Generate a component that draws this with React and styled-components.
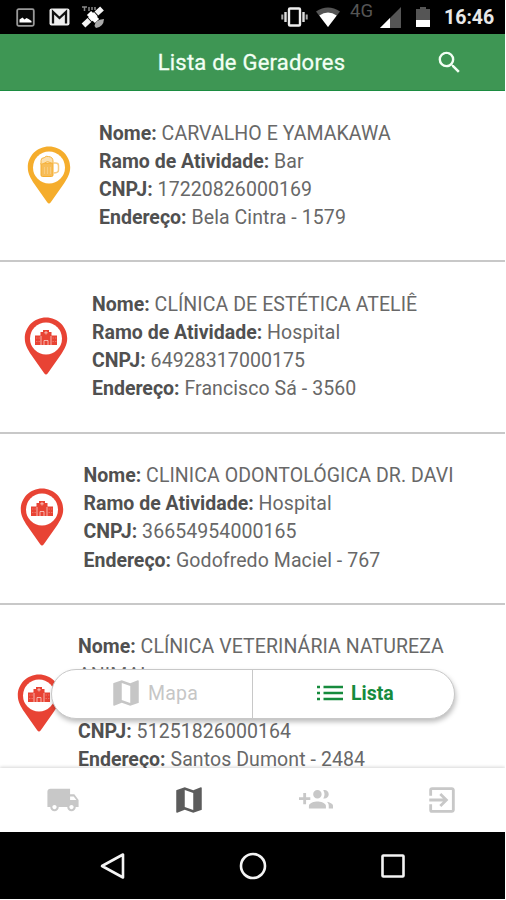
import React from "react";
import styled, { createGlobalStyle } from "styled-components";

const GlobalStyle = createGlobalStyle`
  * { box-sizing: border-box; }
  body { margin: 0; background: #fff; font-family: Roboto, "Liberation Sans", sans-serif; }
`;

const Screen = styled.div`
  width: 505px;
  height: 899px;
  display: flex;
  flex-direction: column;
  overflow: hidden;
  background: #fff;
`;

const StatusBar = styled.div`
  flex: 0 0 34px;
  display: flex;
  align-items: center;
  justify-content: space-between;
  padding: 0 10px 0 16px;
  background: #000;
  color: #e8e8e8;
`;

const StatusGroup = styled.div`
  display: flex;
  align-items: center;
`;

const Glyph = styled.svg`
  display: block;
  flex: none;
  width: ${(p) => p.$w}px;
  height: ${(p) => p.$h || p.$w}px;
  margin-left: ${(p) => p.$gap || 0}px;
`;

const Network = styled.span`
  align-self: flex-start;
  margin: -3px 0 0 10px;
  width: 25px;
  font-size: 18.5px;
  line-height: 20px;
  color: #555;
`;

const Clock = styled.span`
  margin: 2px 0 0 14px;
  width: 51px;
  font-size: 19.5px;
  font-weight: 700;
  line-height: 24px;
  white-space: nowrap;
`;

const Header = styled.header`
  flex: 0 0 57px;
  display: grid;
  grid-template-columns: 1fr auto 1fr;
  align-items: center;
  background: #3e9654;
  border-bottom: 1px solid #1c8c41;
  color: #f2fff4;
`;

const Title = styled.h1`
  grid-column: 2;
  margin: 0;
  padding: 1px 2px 0 0;
  font-size: 22px;
  font-weight: 400;
  line-height: 28px;
  letter-spacing: 0.23px;
  -webkit-text-stroke: 0.3px currentColor;
  white-space: nowrap;
`;

const SearchButton = styled.button`
  justify-self: end;
  margin-right: 41px;
  padding: 0;
  border: 0;
  background: none;
  color: inherit;
`;

const ListArea = styled.main`
  position: relative;
  flex: 0 0 677px;
  overflow: hidden;
`;

const Item = styled.article`
  display: flex;
  align-items: center;
  height: ${(p) => (p.$tall ? 200 : 171.4)}px;
  padding: 0 0 2px ${(p) => p.$inset}px;
  border-bottom: 2px solid #c8c8c8;
`;

const Details = styled.div`
  margin: ${(p) => (p.$tall ? 1 : 2)}px 0 0 ${(p) => p.$gap}px;
  width: 390px;
  font-size: 19.5px;
  line-height: 28.1px;
  color: #686868;
`;

const Line = styled.div`
  white-space: pre-line;
  letter-spacing: 0.08px;
  b { font-weight: 700; color: #505050; letter-spacing: 0; }
`;

const Switcher = styled.div`
  position: absolute;
  left: 51px;
  top: 578px;
  width: 404px;
  height: 50px;
  display: grid;
  grid-template-columns: 1fr 1fr;
  border: 1px solid #c8c8c8;
  border-radius: 25px;
  background: #fff;
  box-shadow: 1px 3px 5px rgba(0, 0, 0, 0.26);
`;

const SwitchTab = styled.button`
  position: relative;
  left: 0;
  display: flex;
  align-items: center;
  padding: 0 0 2px ${(p) => (p.$active ? 64 : 57)}px;
  margin-left: ${(p) => (p.$active ? -1 : 0)}px;
  gap: ${(p) => (p.$active ? 8 : 5)}px;
  border: 0;
  border-left: ${(p) => (p.$active ? "1px solid #c8c8c8" : "0")};
  background: none;
  font: ${(p) => (p.$active ? 700 : 400)} 19.5px Roboto, sans-serif;
  letter-spacing: ${(p) => (p.$active ? 0 : 0.2)}px;
  color: ${(p) => (p.$active ? "#168b3d" : "#c6c6c6")};
`;

const TabBar = styled.nav`
  flex: 0 0 64px;
  display: grid;
  grid-template-columns: repeat(4, 1fr);
  place-items: center;
  background: #fff;
  box-shadow: 0 -1px 3px rgba(0, 0, 0, 0.16);
  z-index: 1;
`;

const TabButton = styled.button`
  padding: 0;
  border: 0;
  background: none;
  color: ${(p) => (p.$active ? "#5c5c5c" : "#c8c8c8")};
`;

const SystemBar = styled.footer`
  flex: 0 0 67px;
  display: flex;
  align-items: center;
  justify-content: center;
  gap: 112px;
  background: #000;
  z-index: 1;
`;

const paths = {
  search: "M15.5 14h-.79l-.28-.27A6.47 6.47 0 0 0 16 9.5 6.5 6.5 0 1 0 9.5 16c1.61 0 3.09-.59 4.23-1.57l.27.28v.79l5 4.99L20.49 19l-4.99-5zm-6 0C7.01 14 5 11.99 5 9.5S7.01 5 9.5 5 14 7.01 14 9.5 11.99 14 9.5 14z",
  map: "M20.5 3l-.16.03L15 5.1 9 3 3.36 4.9c-.21.07-.36.25-.36.48V20.5c0 .28.22.5.5.5l.16-.03L9 18.9l6 2.1 5.64-1.9c.21-.07.36-.25.36-.48V3.5c0-.28-.22-.5-.5-.5zM15 19l-6-2.11V5l6 2.11V19z",
  truck: "M20 8h-3V4H3c-1.1 0-2 .9-2 2v11h2c0 1.66 1.34 3 3 3s3-1.34 3-3h6c0 1.66 1.34 3 3 3s3-1.34 3-3h2v-5l-3-4zM6 18.5c-.83 0-1.5-.67-1.5-1.5s.67-1.5 1.5-1.5 1.5.67 1.5 1.5-.67 1.5-1.5 1.5zm13.5-9l1.96 2.5H17V9.5h2.5zm-1.5 9c-.83 0-1.5-.67-1.5-1.5s.67-1.5 1.5-1.5 1.5.67 1.5 1.5-.67 1.5-1.5 1.5z",
  group: "M8 10H5V7H3v3H0v2h3v3h2v-3h3v-2zm10 1c1.66 0 2.99-1.34 2.99-3S19.66 5 18 5c-.32 0-.63.05-.91.14.57.81.9 1.79.9 2.86s-.34 2.04-.9 2.86c.28.09.59.14.91.14zm-5 0c1.66 0 2.99-1.34 2.99-3S14.66 5 13 5c-1.66 0-3 1.34-3 3s1.34 3 3 3zm6.62 2.16c.83.73 1.38 1.66 1.38 2.84v2h3v-2c0-1.54-2.37-2.49-4.38-2.84zM13 13c-2 0-6 1-6 3v2h12v-2c0-2-4-3-6-3z",
  exit: "M10.09 15.59L11.5 17l5-5-5-5-1.41 1.41L12.67 11H3v2h9.67l-2.58 2.59zM19 3H5a2 2 0 0 0-2 2v4h2V5h14v14H5v-4H3v4a2 2 0 0 0 2 2h14c1.1 0 2-.9 2-2V5c0-1.1-.9-2-2-2z",
};

function Icon({ name, size }) {
  return (
    <Glyph $w={size} viewBox="0 0 24 24" fill="currentColor">
      <path d={paths[name]} />
    </Glyph>
  );
}

function Pin({ kind }) {
  const bar = kind === "bar";
  const color = bar ? "#f5ad2c" : "#e84334";
  return (
    <Glyph $w={44} $h={58} viewBox="0 0 44 58">
      <path
        d="M22 .5C10.2.5.8 9.8.8 21.3c0 6.6 3.1 11.4 6.2 16.2L20.2 56.2q1.8 2.6 3.6 0L37 37.5c3.1-4.8 6.2-9.6 6.2-16.2C43.2 9.8 33.8.5 22 .5z"
        fill={color}
      />
      <circle cx="22" cy="21.5" r="16" fill="#fff" />
      {bar ? (
        <g>
          <path d="M14 17v12q0 1.500 1.500 1.500h9q1.500 0 1.500-1.500V17z" fill="#f7bd58" stroke={color} />
          <path d="M26.500 17h2q3 0 3 2.500v4.500q0 3-5 3" fill="none" stroke="#f8cc80" strokeWidth="1.500" />
          <path d="M14 18.500v-4q0-2.800 3.200-2.800Q19 9.500 21.500 10.500q4.500.5 4.500 4.500v2.500l-3-1-2.500-1-3 1.500z" fill="#fbe0ae" stroke="#f6b440" />
          <path d="M17.500 21v7M20.500 21v7M23.500 21v7" stroke="#f8cc7e" />
        </g>
      ) : (
        <g>
          <path d="M11 18.500h5.500v-3.500h2.500V13h6v2h2.500v3.500H33v9.500H11z" fill={color} />
          <path d="M22 14v3.500M20.200 15.800h3.600M20 28v-4.500h4V28M17 19v9M27 19v9" stroke="#fbd3cd" fill="none" strokeWidth=".8" />
          <path d="M12 21h4M12 24.500h4M28.500 21h4M28.500 24.500h4" stroke="#f07469" strokeDasharray="1.400 1.100" />
        </g>
      )}
    </Glyph>
  );
}

const generators = [
  { inset: 27, gap: 28, kind: "bar", name: "CARVALHO E YAMAKAWA", field: "Bar", cnpj: "17220826000169", address: "Bela Cintra - 1579" },
  { inset: 24, gap: 24, kind: "hospital", name: "CLÍNICA DE ESTÉTICA ATELIÊ", field: "Hospital", cnpj: "64928317000175", address: "Francisco Sá - 3560" },
  { inset: 20, gap: 19.5, kind: "hospital", name: "CLINICA ODONTOLÓGICA DR. DAVI", field: "Hospital", cnpj: "36654954000165", address: "Godofredo Maciel - 767" },
  { inset: 17, gap: 17, kind: "hospital", tall: true, name: "CLÍNICA VETERINÁRIA NATUREZA\nANIMAL", field: "Hospital", cnpj: "51251826000164", address: "Santos Dumont - 2484" },
];

function Generator({ data }) {
  return (
    <Item $inset={data.inset} $tall={data.tall}>
      <Pin kind={data.kind} />
      <Details $gap={data.gap} $tall={data.tall}>
        <Line><b>Nome:</b> {data.name}</Line>
        <Line><b>Ramo de Atividade:</b> {data.field}</Line>
        <Line><b>CNPJ:</b> {data.cnpj}</Line>
        <Line><b>Endereço:</b> {data.address}</Line>
      </Details>
    </Item>
  );
}

export default function App() {
  return (
    <>
      <GlobalStyle />
      <Screen>
        <StatusBar>
          <StatusGroup>
            <Glyph $w={19} viewBox="0 0 19 19">
              <rect x="1.200" y="1.200" width="16.600" height="16.600" rx="1.500" fill="#080808" stroke="#999" strokeWidth="1.800" />
              <path d="M3.500 14.500v-3l3-2 2 2 2-1.500 2 1 3 2v1.500z" fill="#fff" />
            </Glyph>
            <Glyph $w={21} $h={18} $gap={14} viewBox="0 0 21 18">
              <rect x=".5" y=".5" width="20" height="17" rx="2" fill="#eee" />
              <path d="M4 15.500V4l6.500 6L17 4v11.500" fill="none" stroke="#111" strokeWidth="2.300" />
            </Glyph>
            <Glyph $w={24} $h={24} $gap={11} viewBox="0 0 24 24">
              <path d="M1 2h5M3.500 2v4M8 2v4M11 2v3M14 2v3" stroke="#888" strokeWidth="1.500" />
              <path d="M2.500 20.500 21 3.500" stroke="#f4f4f4" strokeWidth="5.500" strokeDasharray="8 .8" />
              <path d="m8 8 8 8" stroke="#fff" strokeWidth="6" />
              <path d="M13.500 21q0-6 9.500-7-.5 8-8 9z" fill="#aaa" />
            </Glyph>
          </StatusGroup>
          <StatusGroup>
            <Glyph $w={27} $h={20} viewBox="0 0 27 20">
              <rect x="8" y="1.500" width="11" height="17" rx="1" fill="none" stroke="#eee" strokeWidth="2.400" />
              <path d="M4.500 5v10M22.500 5v10" stroke="#ddd" strokeWidth="2.400" />
              <path d="M1.300 7.500v5M25.700 7.500v5" stroke="#aaa" strokeWidth="2" />
            </Glyph>
            <Glyph $w={24} $h={20} $gap={8} viewBox="0 0 24 20">
              <path d="M0 4.500Q12-3.500 24 4.500L12 20z" fill="#555" />
              <path d="M3.300 8.500q8.700-6 17.400 0L12 20z" fill="#fff" />
            </Glyph>
            <Network>4G</Network>
            <Glyph $w={21} $h={21} $gap={5} viewBox="0 0 21 21">
              <path d="M0 21 21 0v21z" fill="#555" />
              <path d="M0 21 10 11v10z" fill="#fff" />
            </Glyph>
            <Glyph $w={14} $h={20} $gap={15} viewBox="0 0 14 20">
              <path d="M0 2h4V0h6v2h4v18H0z" fill="#555" />
              <path d="M0 13h14v7H0z" fill="#fff" />
            </Glyph>
            <Clock>16:46</Clock>
          </StatusGroup>
        </StatusBar>
        <Header>
          <Title>Lista de Geradores</Title>
          <SearchButton aria-label="Buscar"><Icon name="search" size={29} /></SearchButton>
        </Header>
        <ListArea>
          {generators.map((g) => <Generator key={g.cnpj} data={g} />)}
          <Switcher>
            <SwitchTab><Icon name="map" size={34} />Mapa</SwitchTab>
            <SwitchTab $active>
              <Glyph $w={26} $h={16} viewBox="0 0 26 16">
                <path d="M0 2h3M0 8h3M0 14h3M6.500 2H26M6.500 8H26M6.500 14H26" stroke="currentColor" strokeWidth="2.600" />
              </Glyph>
              Lista
            </SwitchTab>
          </Switcher>
        </ListArea>
        <TabBar>
          <TabButton aria-label="Coletas"><Icon name="truck" size={34} /></TabButton>
          <TabButton aria-label="Mapa" $active><Icon name="map" size={34} /></TabButton>
          <TabButton aria-label="Grupo"><Icon name="group" size={34} /></TabButton>
          <TabButton aria-label="Sair"><Icon name="exit" size={34} /></TabButton>
        </TabBar>
        <SystemBar>
          <Glyph $w={28} viewBox="0 0 28 28">
            <path d="M3 14 24 2.500v23z" fill="none" stroke="#f4f4f4" strokeWidth="2.600" strokeLinejoin="round" />
          </Glyph>
          <Glyph $w={28} viewBox="0 0 28 28">
            <circle cx="14" cy="14" r="12" fill="none" stroke="#f4f4f4" strokeWidth="2.600" />
          </Glyph>
          <Glyph $w={28} viewBox="0 0 28 28">
            <rect x="3.500" y="3.500" width="21" height="21" rx=".8" fill="none" stroke="#f4f4f4" strokeWidth="2.600" />
          </Glyph>
        </SystemBar>
      </Screen>
    </>
  );
}
